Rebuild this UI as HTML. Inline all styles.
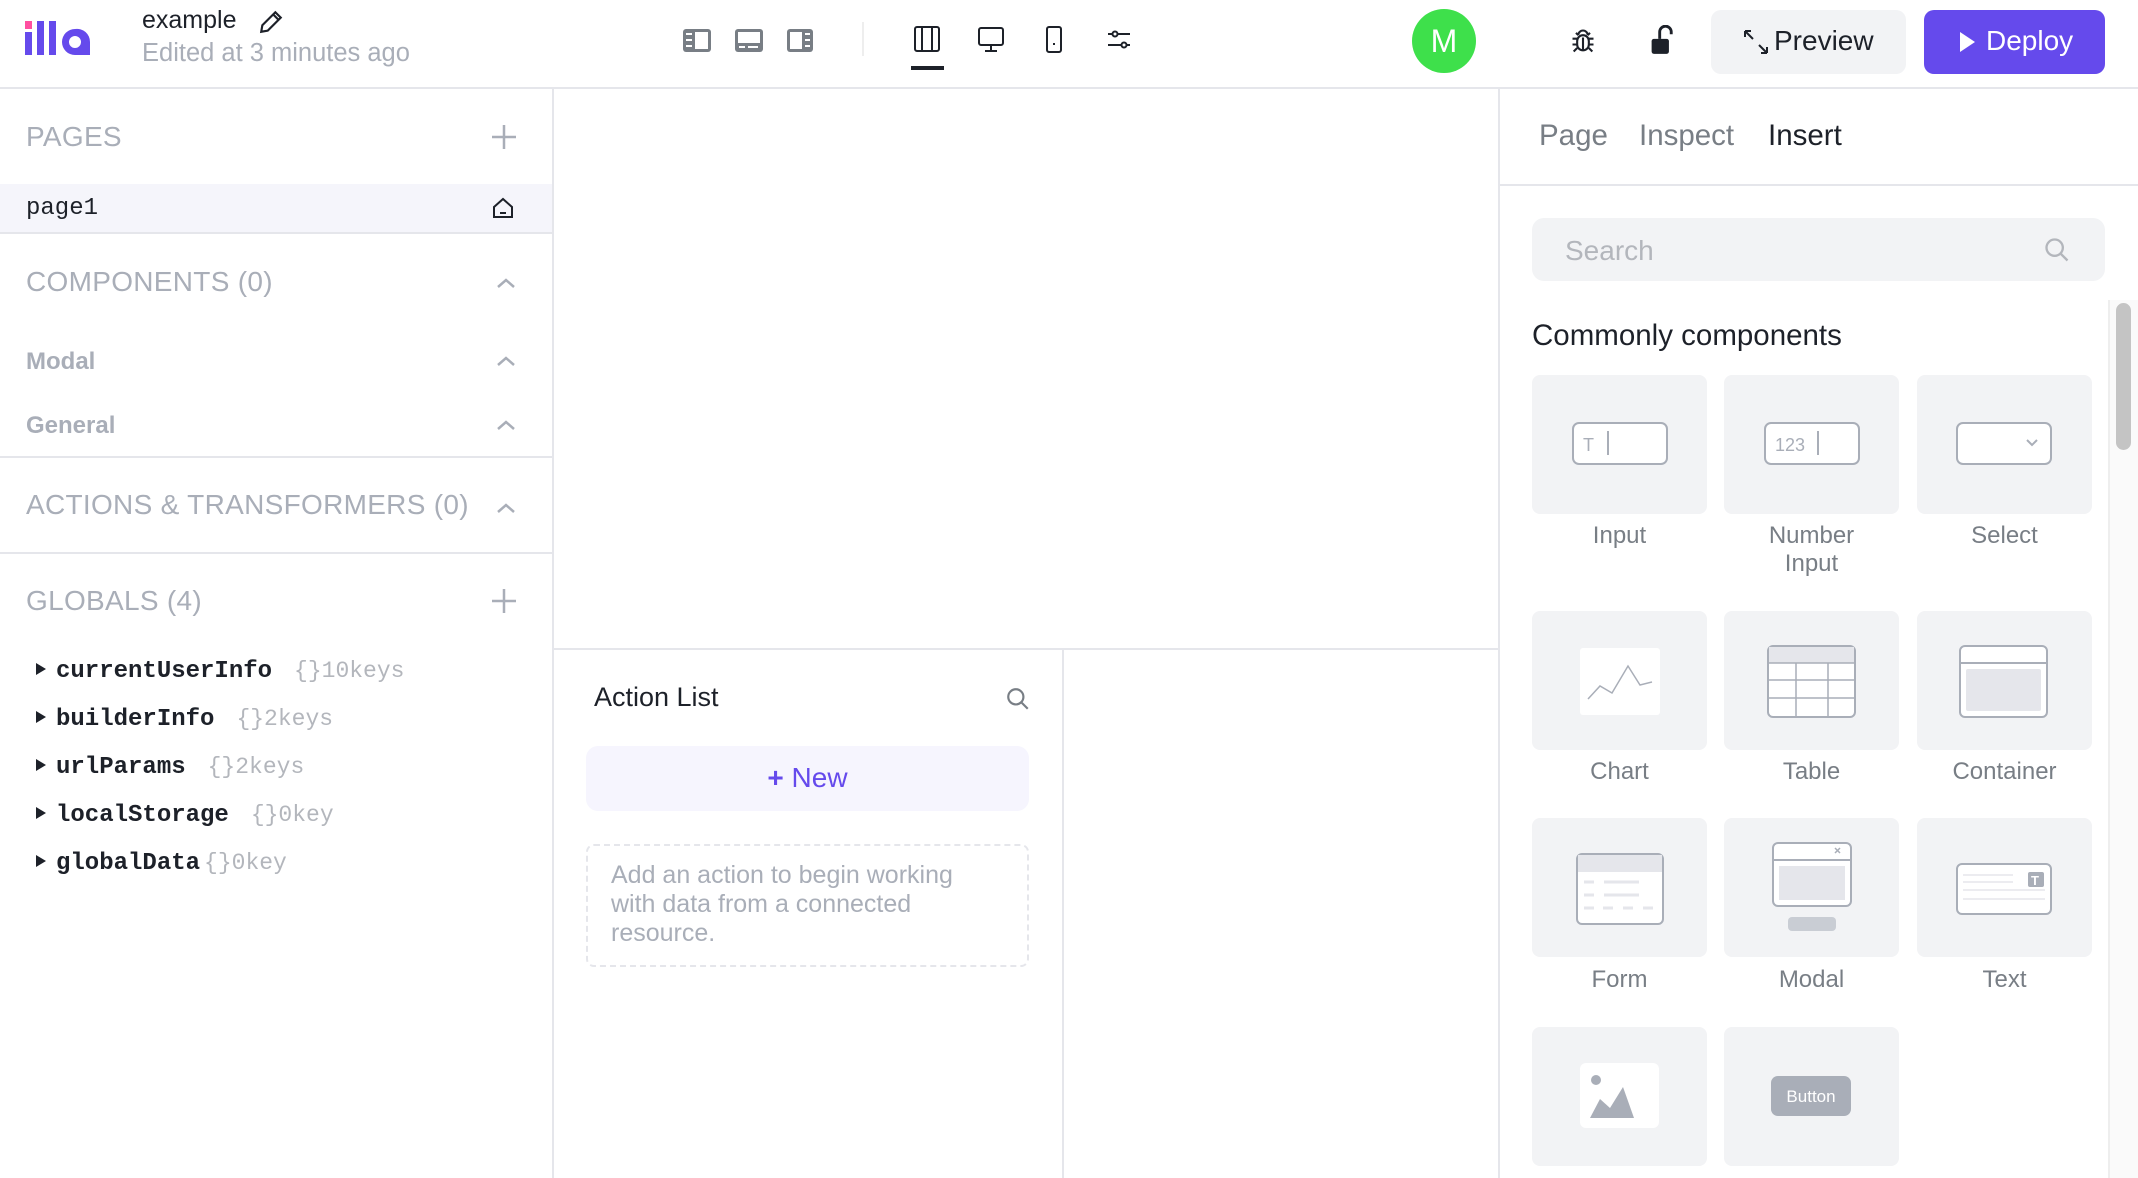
<!DOCTYPE html>
<html><head><meta charset="utf-8"><style>
*{margin:0;padding:0;box-sizing:border-box}
body{width:2138px;height:1178px;position:relative;overflow:hidden;background:#fff;font-family:"Liberation Sans",sans-serif;color:#1d2129}
.a{position:absolute;white-space:nowrap}
.hl{position:absolute;background:#e5e6eb}
.sec{font-size:28px;color:#a9aeb8;letter-spacing:0.3px}
.sub{font-size:24px;color:#a9aeb8;font-weight:bold}
.mono{font-family:"Liberation Mono",monospace;font-size:24px}
.g{font-weight:bold;color:#1d2129}
.k{color:#b3b6bc;font-weight:normal;font-size:23px;margin-left:8px}
.row{height:48px;line-height:48px}
.tri{display:inline-block;width:0;height:0;border-left:10px solid #1d2129;border-top:6px solid transparent;border-bottom:6px solid transparent;margin-right:10px;vertical-align:middle;position:relative;top:-2px}
.card{position:absolute;width:175px;height:139px;background:#f2f3f5;border-radius:8px}
.lbl{position:absolute;width:175px;text-align:center;font-size:24px;color:#787e85;line-height:28px}
</style></head><body>

<!-- header -->
<svg class="a" style="left:25px;top:21px" width="72" height="36" viewBox="0 0 72 36">
<rect x="0" y="0" width="7" height="8" fill="#ff4fa0"/><rect x="0" y="11" width="7" height="23" fill="#654aec"/>
<rect x="12" y="0" width="7" height="34" fill="#654aec"/><rect x="24" y="0" width="7" height="34" fill="#654aec"/>
<path d="M50 8 a13 13 0 1 0 0 26 h15 v-13 a13 13 0 0 0 -15 -13z M50 15 a6 6 0 1 1 0 12 a6 6 0 0 1 0 -12z" fill="#654aec" fill-rule="evenodd"/>
</svg>
<div class="a" style="left:142px;top:6px;font-size:25px;color:#1d2129">example</div>
<svg class="a" style="left:258px;top:9px" width="26" height="26" viewBox="0 0 24 24" fill="none" stroke="#1d2129" stroke-width="2"><path d="M16 3l5 5L9 20l-6 1 1-6z M14 5l5 5"/></svg>
<div class="a" style="left:142px;top:39px;font-size:25.5px;color:#a9aeb8">Edited at 3 minutes ago</div>

<svg class="a" style="left:683px;top:28px" width="130" height="26" viewBox="0 0 130 26">
<g fill="#787e85"><rect x="0" y="1" width="28" height="23" rx="3"/><rect x="52" y="1" width="28" height="23" rx="3"/><rect x="104" y="1" width="26" height="23" rx="3"/></g>
<g fill="#fff"><rect x="12" y="4" width="13" height="17"/><rect x="3" y="5" width="6" height="2"/><rect x="3" y="11" width="6" height="2"/><rect x="3" y="17" width="6" height="2"/>
<rect x="55" y="4" width="22" height="11"/><rect x="56" y="18" width="6" height="2"/><rect x="65" y="18" width="10" height="2"/>
<rect x="107" y="4" width="12" height="17"/><rect x="122" y="5" width="5" height="2"/><rect x="122" y="11" width="5" height="2"/><rect x="122" y="17" width="5" height="2"/></g></svg>
<div class="hl" style="left:862px;top:22px;width:2px;height:34px;background:#eee"></div>
<svg class="a" style="left:914px;top:26px" width="220" height="28" viewBox="0 0 220 28" fill="none" stroke="#1d2129" stroke-width="2">
<rect x="1" y="1" width="24" height="24" rx="2"/><path d="M8 1v24M18 1v24"/>
<rect x="65" y="2" width="24" height="17" rx="2"/><path d="M77 19v5M71 25h12"/>
<rect x="133" y="1" width="14" height="25" rx="2"/><path d="M140 17v2"/>
<path d="M194 8h22M194 19h22"/><circle cx="201" cy="8" r="2.5" fill="#fff"/><circle cx="210" cy="19" r="2.5" fill="#fff"/>
</svg>
<div class="a" style="left:911px;top:66px;width:33px;height:4px;background:#1d2129"></div>
<div class="a" style="left:1412px;top:9px;width:64px;height:64px;border-radius:50%;background:#3ee04b;color:#fff;font-size:32px;line-height:64px;text-align:center">M</div>
<svg class="a" style="left:1569px;top:27px" width="28" height="28" viewBox="0 0 24 24" fill="none" stroke="#1d2129" stroke-width="1.8"><path d="M8 7a4 4 0 0 1 8 0"/><rect x="7" y="7" width="10" height="13" rx="5"/><path d="M12 9v11M3 10h4M17 10h4M3 15h4M17 15h4M4 21l3-3M20 21l-3-3M6 5l2 2M18 5l-2 2"/></svg>
<svg class="a" style="left:1649px;top:25px" width="26" height="30" viewBox="0 0 22 26"><path d="M9 12V6a5 5 0 0 1 10 0v2" fill="none" stroke="#1d2129" stroke-width="2.5"/><rect x="2" y="12" width="15" height="13" rx="2" fill="#1d2129"/></svg>
<div class="a" style="left:1711px;top:10px;width:195px;height:64px;border-radius:10px;background:#f2f3f5"></div>
<svg class="a" style="left:1743px;top:29px" width="26" height="26" viewBox="0 0 26 26" fill="none" stroke="#1d2129" stroke-width="2"><path d="M2 2l8 8M2 2v6M2 2h6M24 24l-8-8M24 24v-6M24 24h-6"/></svg>
<div class="a" style="left:1774px;top:25px;font-size:28px;color:#1d2129">Preview</div>
<div class="a" style="left:1924px;top:10px;width:181px;height:64px;border-radius:10px;background:#654aec"></div>
<svg class="a" style="left:1960px;top:32px" width="16" height="20"><path d="M0 0L15 10L0 20z" fill="#fff"/></svg>
<div class="a" style="left:1986px;top:25px;font-size:28px;color:#fff">Deploy</div>
<div class="hl" style="left:0;top:87px;width:2138px;height:2px"></div>

<!-- left panel -->
<div class="hl" style="left:552px;top:87px;width:2px;height:1091px"></div>
<div class="a sec" style="left:26px;top:121px">PAGES</div>
<svg class="a" style="left:491px;top:124px" width="26" height="26" stroke="#a9aeb8" stroke-width="2.5"><path d="M13 1v24M1 13h24"/></svg>
<div class="a" style="left:0;top:184px;width:552px;height:48px;background:#f5f5fb"></div>
<div class="a mono" style="left:26px;top:195px;color:#1d2129">page1</div>
<svg class="a" style="left:492px;top:197px" width="22" height="22" viewBox="0 0 22 22" fill="none" stroke="#1d2129" stroke-width="2"><path d="M2 10L11 2l9 8v10H2z M8 16h6"/></svg>
<div class="hl" style="left:0;top:232px;width:552px;height:2px"></div>
<div class="a sec" style="left:26px;top:266px">COMPONENTS (0)</div>
<div class="a sub" style="left:26px;top:348px">Modal</div>
<div class="a sub" style="left:26px;top:412px">General</div>
<svg class="a" style="left:495px;top:273px" width="22" height="170" fill="none" stroke="#a9aeb8" stroke-width="2.5"><path d="M3 14l8-7 8 7M3 92l8-7 8 7M3 156l8-7 8 7"/></svg>
<div class="hl" style="left:0;top:456px;width:552px;height:2px"></div>
<div class="a sec" style="left:26px;top:489px">ACTIONS &amp; TRANSFORMERS (0)</div>
<svg class="a" style="left:495px;top:498px" width="22" height="20" fill="none" stroke="#a9aeb8" stroke-width="2.5"><path d="M3 14l8-7 8 7"/></svg>
<div class="hl" style="left:0;top:552px;width:552px;height:2px"></div>
<div class="a sec" style="left:26px;top:585px">GLOBALS (4)</div>
<svg class="a" style="left:491px;top:588px" width="26" height="26" stroke="#a9aeb8" stroke-width="2.5"><path d="M13 1v24M1 13h24"/></svg>
<div class="a mono" style="left:36px;top:647px">
<div class="row"><span class="tri"></span><span class="g">currentUserInfo</span><span class="k" style="margin-left:22px">{}10keys</span></div>
<div class="row"><span class="tri"></span><span class="g">builderInfo</span><span class="k" style="margin-left:22px">{}2keys</span></div>
<div class="row"><span class="tri"></span><span class="g">urlParams</span><span class="k" style="margin-left:22px">{}2keys</span></div>
<div class="row"><span class="tri"></span><span class="g">localStorage</span><span class="k" style="margin-left:22px">{}0key</span></div>
<div class="row"><span class="tri"></span><span class="g">globalData</span><span class="k" style="margin-left:4px">{}0key</span></div>
</div>

<!-- canvas / action list -->
<div class="hl" style="left:554px;top:648px;width:945px;height:2px"></div>
<div class="hl" style="left:1062px;top:650px;width:2px;height:528px"></div>
<div class="a" style="left:594px;top:682px;font-size:27px;color:#1d2129">Action List</div>
<svg class="a" style="left:1005px;top:686px" width="26" height="26" viewBox="0 0 24 24" fill="none" stroke="#787e85" stroke-width="2"><circle cx="10" cy="10" r="7"/><path d="M15 15l6 6"/></svg>
<div class="a" style="left:586px;top:746px;width:443px;height:65px;border-radius:12px;background:#f6f5fe"></div>
<div class="a" style="left:586px;top:762px;width:443px;text-align:center;font-size:28px;color:#654aec"><b>+</b> New</div>
<div class="a" style="left:586px;top:844px;width:443px;height:123px;border:2px dashed #e5e6eb;border-radius:8px"></div>
<div class="a" style="left:611px;top:861px;font-size:25px;line-height:29px;color:#a9aeb8;white-space:normal;width:385px">Add an action to begin working with data from a connected resource.</div>

<!-- right panel -->
<div class="hl" style="left:1498px;top:87px;width:2px;height:1091px"></div>
<div class="a" style="left:1539px;top:119px;font-size:29.5px;color:#787e85">Page</div>
<div class="a" style="left:1639px;top:119px;font-size:29.5px;color:#787e85">Inspect</div>
<div class="a" style="left:1768px;top:119px;font-size:29.5px;color:#1d2129">Insert</div>
<div class="hl" style="left:1500px;top:184px;width:638px;height:2px"></div>
<div class="a" style="left:1532px;top:218px;width:573px;height:63px;border-radius:12px;background:#f2f3f5"></div>
<div class="a" style="left:1565px;top:235px;font-size:28px;color:#b3b6bc">Search</div>
<svg class="a" style="left:2043px;top:236px" width="28" height="28" viewBox="0 0 24 24" fill="none" stroke="#b3b6bc" stroke-width="2"><circle cx="10" cy="10" r="7"/><path d="M15 15l6 6"/></svg>
<div class="a" style="left:1532px;top:319px;font-size:29.5px;color:#1d2129">Commonly components</div>
<div class="a" style="left:2108px;top:300px;width:30px;height:878px;background:#fafafa;border-left:2px solid #eee"></div>
<div class="a" style="left:2116px;top:303px;width:15px;height:147px;border-radius:8px;background:#c4c4c4"></div>

<div class="card" style="left:1532px;top:375px"></div><div class="card" style="left:1724px;top:375px"></div><div class="card" style="left:1917px;top:375px"></div>
<div class="card" style="left:1532px;top:611px"></div><div class="card" style="left:1724px;top:611px"></div><div class="card" style="left:1917px;top:611px"></div>
<div class="card" style="left:1532px;top:818px"></div><div class="card" style="left:1724px;top:818px"></div><div class="card" style="left:1917px;top:818px"></div>
<div class="card" style="left:1532px;top:1027px"></div><div class="card" style="left:1724px;top:1027px"></div>

<div class="lbl" style="left:1532px;top:522px">Input</div>
<div class="lbl" style="left:1724px;top:522px">Number<br>Input</div>
<div class="lbl" style="left:1917px;top:522px">Select</div>
<div class="lbl" style="left:1532px;top:758px">Chart</div>
<div class="lbl" style="left:1724px;top:758px">Table</div>
<div class="lbl" style="left:1917px;top:758px">Container</div>
<div class="lbl" style="left:1532px;top:966px">Form</div>
<div class="lbl" style="left:1724px;top:966px">Modal</div>
<div class="lbl" style="left:1917px;top:966px">Text</div>

<svg class="a" style="left:0;top:0" width="2138" height="1178" fill="none" stroke="#a9aeb8" stroke-width="2">
<g transform="translate(0,-5)">
<rect x="1573" y="428" width="94" height="41" rx="6" fill="#fff"/>
<text x="1583" y="456" font-family="Liberation Sans" font-size="18" fill="#a9aeb8" stroke="none">T</text><path d="M1608 436v24"/>
<rect x="1765" y="428" width="94" height="41" rx="6" fill="#fff"/>
<text x="1775" y="456" font-family="Liberation Sans" font-size="18" fill="#a9aeb8" stroke="none">123</text><path d="M1818 436v24"/>
<rect x="1957" y="428" width="94" height="41" rx="6" fill="#fff"/><path d="M2027 445l5 5 5-5"/>
</g>
<g transform="translate(0,-18)">
<rect x="1580" y="666" width="80" height="67" rx="3" fill="#fff" stroke="none"/>
<path d="M1588 717l12-13 12 7 16-27 12 19 12-3" stroke-width="1.5"/>
<rect x="1768" y="664" width="87" height="71" rx="5" fill="#fff"/><rect x="1769" y="665" width="85" height="16" fill="#e5e6eb" stroke="none"/>
<path d="M1768 681h87M1768 698h87M1768 716h87M1796 681v54M1828 681v54" stroke-width="1.5"/>
<rect x="1960" y="664" width="87" height="71" rx="5" fill="#fff"/><path d="M1960 681h87"/><rect x="1966" y="687" width="75" height="42" rx="2" fill="#e5e6eb" stroke="none"/>
</g>
<g transform="translate(0,-32)">
<rect x="1577" y="886" width="86" height="70" rx="5" fill="#fff"/><rect x="1578" y="887" width="84" height="17" fill="#e5e6eb" stroke="none"/>
<path d="M1584 914h10M1604 914h35M1584 927h10M1604 927h35M1584 940h10M1603 940h10M1623 940h10M1643 940h10" stroke="#e5e6eb" stroke-width="3"/>
<rect x="1773" y="875" width="78" height="63" rx="5" fill="#fff"/><path d="M1773 892h78"/><rect x="1779" y="898" width="66" height="34" fill="#e5e6eb" stroke="none"/>
<path d="M1835 880l5 5M1840 880l-5 5" stroke-width="1.5"/><rect x="1788" y="949" width="48" height="14" rx="4" fill="#c9cdd4" stroke="none"/>
<rect x="1957" y="896" width="94" height="50" rx="5" fill="#fff"/><path d="M1963 907h50M1963 914h50M1963 922h82M1963 931h82" stroke="#e5e6eb" stroke-width="1.5"/>
<rect x="2028" y="904" width="16" height="15" rx="2" fill="#a9aeb8" stroke="none"/>
<text x="2031" y="917" font-family="Liberation Sans" font-size="13" font-weight="bold" fill="#fff" stroke="none">T</text>
</g>
<rect x="1580" y="1063" width="79" height="65" rx="6" fill="#fff" stroke="none"/>
<circle cx="1596" cy="1080" r="5" fill="#a9aeb8" stroke="none"/><path d="M1590 1118l10-19 10 9 13-21 11 31z" fill="#a9aeb8" stroke="none"/>
<rect x="1771" y="1076" width="80" height="40" rx="7" fill="#a9aeb8" stroke="none"/>
<text x="1811" y="1102" text-anchor="middle" font-family="Liberation Sans" font-size="17" fill="#fff" stroke="none">Button</text>
</svg>
</body></html>
